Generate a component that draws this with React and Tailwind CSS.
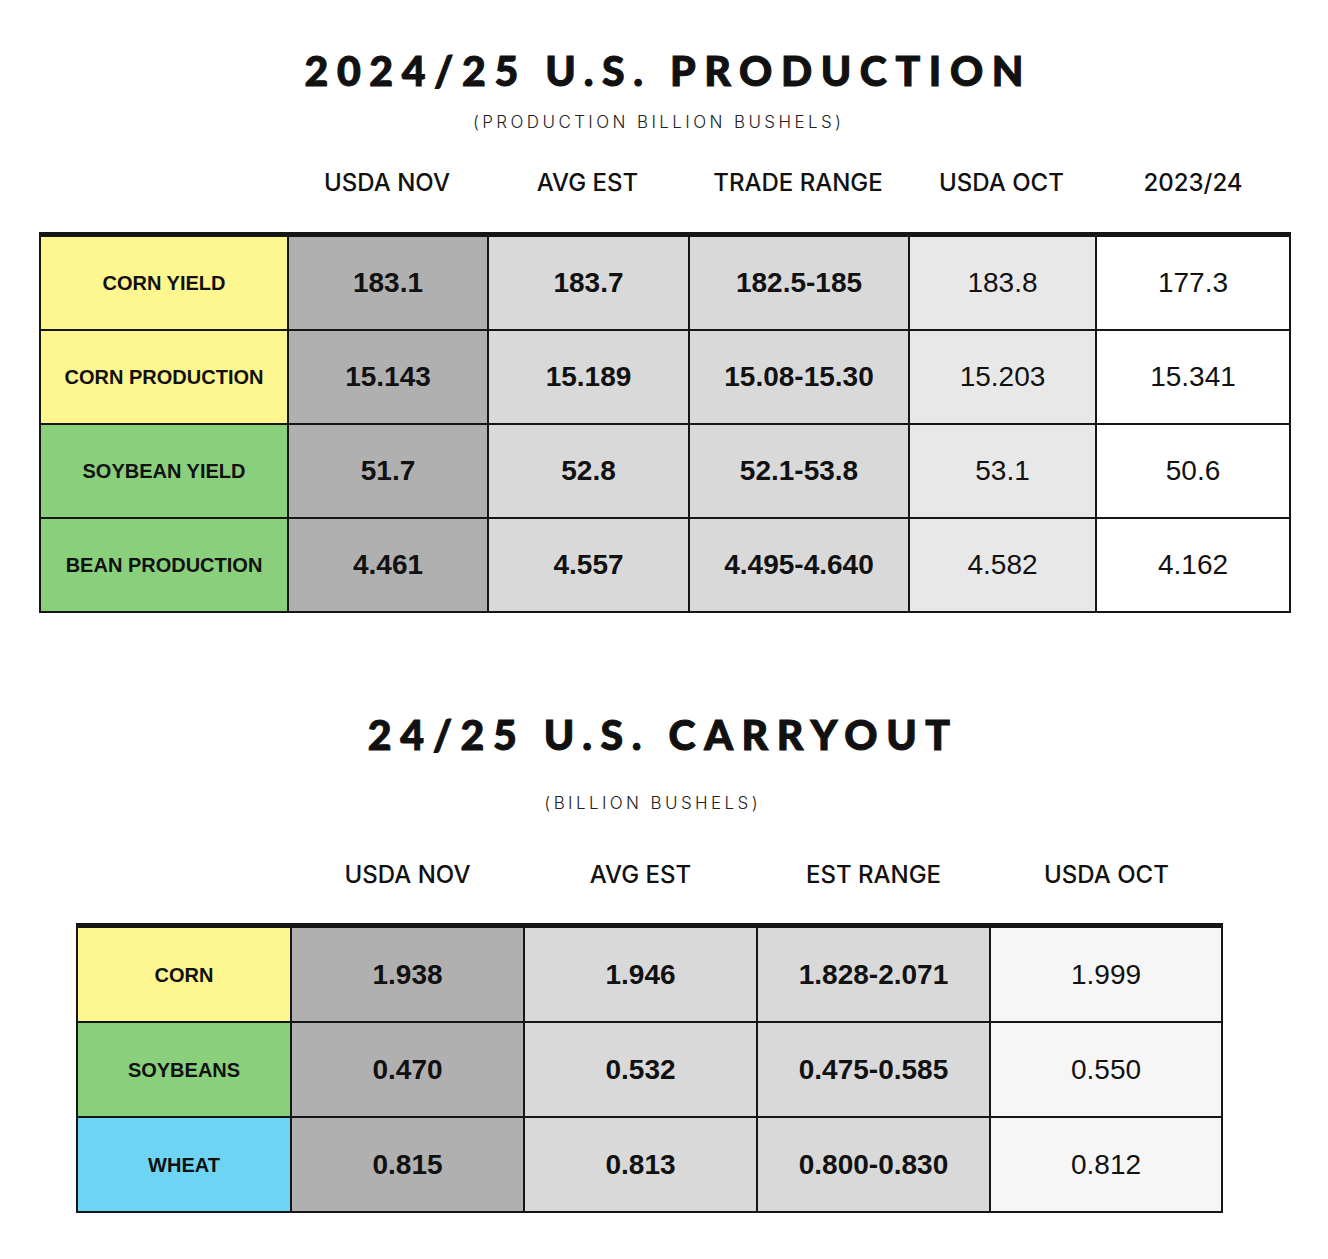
import React from "react";

const production = [
  { label: "CORN YIELD", bg: "bg-[#fef68e]", vals: ["183.1", "183.7", "182.5-185", "183.8", "177.3"] },
  { label: "CORN PRODUCTION", bg: "bg-[#fef68e]", vals: ["15.143", "15.189", "15.08-15.30", "15.203", "15.341"] },
  { label: "SOYBEAN YIELD", bg: "bg-[#89cf7c]", vals: ["51.7", "52.8", "52.1-53.8", "53.1", "50.6"] },
  { label: "BEAN PRODUCTION", bg: "bg-[#89cf7c]", vals: ["4.461", "4.557", "4.495-4.640", "4.582", "4.162"] },
];

const carryout = [
  { label: "CORN", bg: "bg-[#fef68e]", vals: ["1.938", "1.946", "1.828-2.071", "1.999"] },
  { label: "SOYBEANS", bg: "bg-[#89cf7c]", vals: ["0.470", "0.532", "0.475-0.585", "0.550"] },
  { label: "WHEAT", bg: "bg-[#6dd5f3]", vals: ["0.815", "0.813", "0.800-0.830", "0.812"] },
];

// column fills, left to right after the label column
const prodFills = ["bg-[#b0b0b0]", "bg-[#d9d9d9]", "bg-[#d9d9d9]", "bg-[#e8e8e8]", "bg-white"];
const prodBold = [true, true, true, false, false];
const carryFills = ["bg-[#b0b0b0]", "bg-[#d9d9d9]", "bg-[#d9d9d9]", "bg-[#f6f6f6]"];
const carryBold = [true, true, true, false];

const Title = ({ children, shift = "" }) => (
  <div className={`h-[44px] flex items-center justify-center ${shift}`}>
    <h1 className="font-['Lato','Liberation_Sans',sans-serif] font-black text-[41px] leading-none tracking-[0.21em] text-[#111] pl-[0.21em] [-webkit-text-stroke:1px_#111]">
      {children}
    </h1>
  </div>
);

const Subtitle = ({ children, shift = "" }) => (
  <div className={`h-[20px] flex items-center justify-center ${shift}`}>
    <p className="font-['Inter',sans-serif] font-light text-[17px] leading-none tracking-[0.2em] text-[#222] pl-[0.2em]">
      {children}
    </p>
  </div>
);

const Header = ({ children }) => (
  <div className="flex items-center justify-center font-['Inter',sans-serif] font-medium text-[24px] leading-none text-[#111]">
    {children}
  </div>
);

export default function App() {
  return (
    <div className="w-[1328px] min-h-[1259px] bg-white pt-[48px] font-['Liberation_Sans',Arial,sans-serif] text-[#111]">
      {/* Production */}
      <Title>2024/25 U.S. PRODUCTION</Title>
      <div className="mt-[20px]">
        <Subtitle shift="pr-[14px]">(PRODUCTION BILLION BUSHELS)</Subtitle>
      </div>

      <div className="mt-[36px] ml-[39px] h-[30px] grid grid-cols-[248px_200px_201px_220px_187px_196px]">
        <div />
        <Header>USDA NOV</Header>
        <Header>AVG EST</Header>
        <Header>TRADE RANGE</Header>
        <Header>USDA OCT</Header>
        <Header>2023/24</Header>
      </div>

      <div className="mt-[34px] ml-[39px] w-[1252px] bg-[#161616] p-[2px] pt-[5px] grid grid-cols-[246px_198px_199px_218px_185px_192px] gap-[2px]">
        {production.map((row) => (
          <React.Fragment key={row.label}>
            <div className={`h-[92px] flex items-center justify-center font-bold text-[20px] ${row.bg}`}>
              {row.label}
            </div>
            {row.vals.map((v, i) => (
              <div
                key={i}
                className={`h-[92px] flex items-center justify-center text-[28px] ${prodFills[i]} ${prodBold[i] ? "font-bold" : "font-normal"}`}
              >
                {v}
              </div>
            ))}
          </React.Fragment>
        ))}
      </div>

      {/* Carryout */}
      <div className="mt-[99px]">
        <Title shift="pr-[10px]">24/25 U.S. CARRYOUT</Title>
      </div>
      <div className="mt-[37px]">
        <Subtitle shift="pr-[26px]">(BILLION BUSHELS)</Subtitle>
      </div>

      <div className="mt-[47px] ml-[76px] h-[30px] grid grid-cols-[215px_233px_233px_233px_233px]">
        <div />
        <Header>USDA NOV</Header>
        <Header>AVG EST</Header>
        <Header>EST RANGE</Header>
        <Header>USDA OCT</Header>
      </div>

      <div className="mt-[33px] ml-[76px] w-[1147px] bg-[#161616] p-[2px] pt-[5px] grid grid-cols-[212px_231px_231px_231px_230px] gap-[2px]">
        {carryout.map((row) => (
          <React.Fragment key={row.label}>
            <div className={`h-[93px] flex items-center justify-center font-bold text-[20px] ${row.bg}`}>
              {row.label}
            </div>
            {row.vals.map((v, i) => (
              <div
                key={i}
                className={`h-[93px] flex items-center justify-center text-[28px] ${carryFills[i]} ${carryBold[i] ? "font-bold" : "font-normal"}`}
              >
                {v}
              </div>
            ))}
          </React.Fragment>
        ))}
      </div>
    </div>
  );
}
